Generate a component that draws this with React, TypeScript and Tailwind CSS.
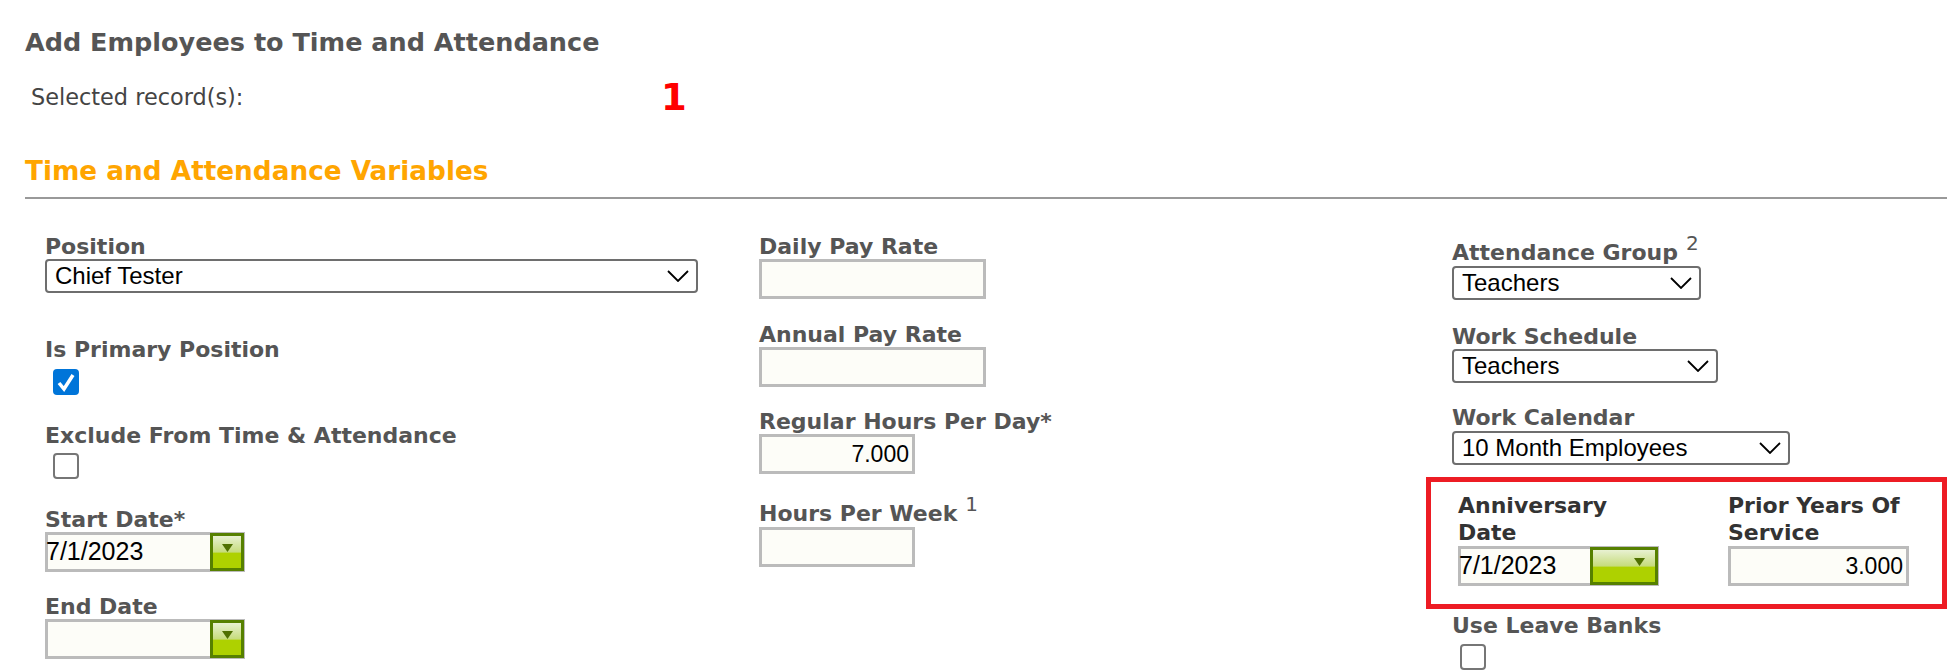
const labelFont = "font-['DejaVu_Sans',sans-serif] font-bold text-[22px] leading-[25px]";
const valueFont = "font-['Liberation_Sans',sans-serif] text-black";

function Label({ text, note, dark = false, className = "" }: { text: string; note?: string; dark?: boolean; className?: string }) {
  return (
    <div className={`${labelFont} ${dark ? "text-[#333] leading-[27px]" : "text-[#555]"} ${className}`}>
      {text}
      {note && <span className="relative top-[-10px] ml-[8px] font-normal text-[20px]">{note}</span>}
    </div>
  );
}

function Select({ value, width }: { value: string; width: string }) {
  return (
    <div className={`relative h-[34px] ${width}`}>
      <select
        defaultValue={value}
        className={`block h-full w-full appearance-none rounded-[4px] border-2 border-[#6e6e6e] bg-white pl-[8px] text-[24px] leading-[28px] ${valueFont}`}
      >
        <option>{value}</option>
      </select>
      <svg viewBox="0 0 22 12" fill="none" stroke="black" strokeWidth={1.8} className="pointer-events-none absolute right-[9px] top-[11px] h-[12px] w-[22px]">
        <path d="M1 1l10 10L21 1" />
      </svg>
    </div>
  );
}

function Checkbox({ checked = false }: { checked?: boolean }) {
  if (checked) {
    return (
      <div className="ml-2 h-[26px] w-[26px] rounded-[4px] bg-[#0075d9]">
        <svg viewBox="0 0 26 26" className="h-[26px] w-[26px]" fill="none" stroke="white" strokeWidth={3.5}>
          <path d="M6 14l5 6 9-14" />
        </svg>
      </div>
    );
  }
  return <div className="ml-2 h-[26px] w-[26px] rounded-[4px] border-2 border-[#767676] bg-white" />;
}

function TextBox({ value = "", width }: { value?: string; width: string }) {
  return (
    <input
      readOnly
      value={value}
      className={`block h-[40px] border-[3px] border-[#bbb] bg-[#fdfdf8] pr-[3px] text-right text-[23px] outline-none ${valueFont} ${width}`}
    />
  );
}

function DateBox({ value = "", wide = false }: { value?: string; wide?: boolean }) {
  return (
    <div className={`flex h-[40px] border-[3px] border-[#bbb] bg-[#fdfdf8] ${wide ? "w-[201px]" : "w-[200px]"}`}>
      <input readOnly value={value} className={`-ml-[2px] min-w-0 flex-1 bg-transparent text-[25px] outline-none ${valueFont}`} />
      <div
        className={`-my-[2px] -mr-[2px] flex items-start border-[3px] border-[#568000] bg-[linear-gradient(#e8f1d2_0%,#c6dc7c_50%,#aed100_54%,#aed100_100%)] pt-[8px] ${wide ? "w-[68px] justify-end pr-[10px]" : "w-[34px] justify-center"}`}
      >
        <svg viewBox="0 0 11 8" className="h-[8px] w-[11px]">
          <path d="M0 0h11L5.5 8z" fill="#4f7000" />
        </svg>
      </div>
    </div>
  );
}

export default function App() {
  return (
    <div className="h-[670px] w-[1947px] overflow-hidden bg-white pl-[25px] pt-[29px]">
      <h1 className="font-['DejaVu_Sans',sans-serif] text-[25.5px] font-bold leading-[27px] text-[#555]">
        Add Employees to Time and Attendance
      </h1>

      <div className="mt-[27px] flex h-[30px] items-center pl-[6px] font-['DejaVu_Sans',sans-serif] text-[22.4px] text-[#444]">
        <span className="w-[630px]">Selected record(s):</span>
        <span className="text-[37px] font-bold text-[#f00]">1</span>
      </div>

      <h2 className="mt-[43px] font-['DejaVu_Sans',sans-serif] text-[26.3px] font-bold leading-[30px] text-[#ffa500]">
        Time and Attendance Variables
      </h2>
      <div className="mt-[11px] h-[2px] bg-[#999]" />

      <div className="mt-[35px] flex pl-[20px]">
        {/* left column */}
        <div className="w-[714px]">
          <Label text="Position" />
          <Select value="Chief Tester" width="w-[653px]" />
          <Label text="Is Primary Position" className="mt-[44px]" />
          <div className="mt-[7px]"><Checkbox checked /></div>
          <Label text="Exclude From Time & Attendance" className="mt-[28px]" />
          <div className="mt-[5px]"><Checkbox /></div>
          <Label text="Start Date*" className="mt-[28px]" />
          <DateBox value="7/1/2023" />
          <Label text="End Date" className="mt-[22px]" />
          <DateBox />
        </div>

        {/* middle column */}
        <div className="w-[693px]">
          <Label text="Daily Pay Rate" />
          <TextBox width="w-[227px]" />
          <Label text="Annual Pay Rate" className="mt-[23px]" />
          <TextBox width="w-[227px]" />
          <Label text="Regular Hours Per Day*" className="mt-[22px]" />
          <TextBox value="7.000" width="w-[156px]" />
          <Label text="Hours Per Week" note="1" className="mt-[27px]" />
          <TextBox width="w-[156px]" />
        </div>

        {/* right column */}
        <div className="flex-1 pt-[6px]">
          <Label text="Attendance Group" note="2" />
          <Select value="Teachers" width="w-[249px]" />
          <Label text="Work Schedule" className="mt-[24px]" />
          <Select value="Teachers" width="w-[266px]" />
          <Label text="Work Calendar" className="mt-[22px]" />
          <div className="mt-[1px]"><Select value="10 Month Employees" width="w-[338px]" /></div>

          <div className="ml-[-26px] mt-[12px] flex h-[132px] w-[521px] gap-[69px] border-[5px] border-[#ed1c24] pl-[27px] pt-[10px]">
            <div>
              <Label text="Anniversary" dark />
              <Label text="Date" dark />
              <DateBox value="7/1/2023" wide />
            </div>
            <div>
              <Label text="Prior Years Of" dark />
              <Label text="Service" dark />
              <TextBox value="3.000" width="w-[181px]" />
            </div>
          </div>

          <Label text="Use Leave Banks" className="mt-[4px]" />
          <div className="mt-[6px]"><Checkbox /></div>
        </div>
      </div>
    </div>
  );
}
